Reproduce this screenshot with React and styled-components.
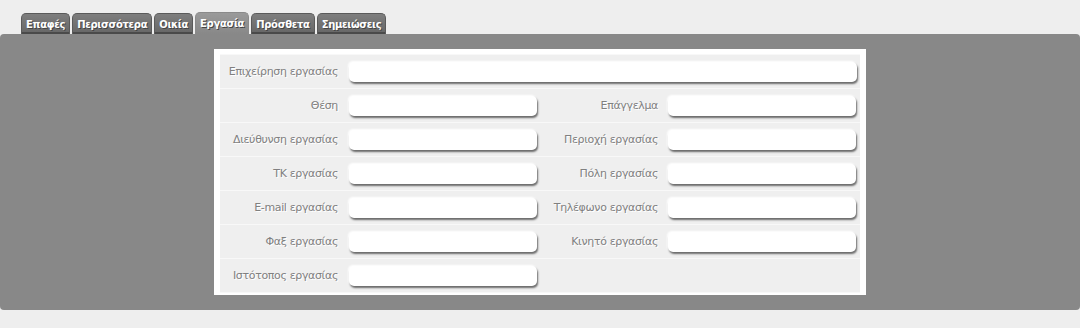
import React from "react";
import styled, { createGlobalStyle } from "styled-components";

const Global = createGlobalStyle`
  html, body { margin: 0; padding: 0; background: #eeeeee; }
  body { font-family: "DejaVu Sans", Verdana, sans-serif; }
`;

const Page = styled.div`
  width: 1080px;
  height: 328px;
  padding-top: 12px;
  box-sizing: border-box;
`;

const TabBar = styled.div`
  display: flex;
  gap: 2px;
  padding-left: 21px;
  height: 22px;
  align-items: flex-end;
`;

const Tab = styled.div`
  height: ${p => (p.$active ? "22px" : "21px")};
  box-sizing: border-box;
  padding: 0 4px;
  display: flex;
  align-items: center;
  border-radius: 5px 5px 0 0;
  border: 1px solid ${p => (p.$active ? "#8a8a8a" : "#5a5a5a")};
  border-bottom: none;
  background: ${p =>
    p.$active
      ? "linear-gradient(#9a9a9a, #888888)"
      : "linear-gradient(#7e7e7e, #666666)"};
  box-shadow: ${p => (p.$active ? "none" : "inset 0 -2px 0 #4a4a4a")};
  color: #ffffff;
  font-family: "DejaVu Sans", Verdana, sans-serif;
  font-weight: bold;
  font-size: 10px;
  letter-spacing: -0.3px;
  text-shadow: 1px 1px 0 #444;
`;

const Panel = styled.div`
  background: #888888;
  border-radius: 4px;
  height: 276px;
  padding-top: 15px;
  box-sizing: border-box;
  display: flex;
  justify-content: center;
`;

const FormBox = styled.div`
  width: 652px;
  height: 246px;
  box-sizing: border-box;
  background: #ffffff;
  padding: 5px 6px 7px 6px;
`;

const Table = styled.table`
  width: 640px;
  table-layout: fixed;
  border-collapse: separate;
  border-spacing: 0 1px;
  background: #f8f8f8;
`;

const Row = styled.tr`
  height: 33px;
`;

const LabelCell = styled.td`
  background: #efefef;
  text-align: right;
  padding: 0 ${p => p.$pr}px 0 0;
  color: #808080;
  font-family: "DejaVu Sans", Verdana, sans-serif;
  font-size: 11px;
  letter-spacing: -0.35px;
  white-space: nowrap;
  text-shadow: 1px 1px 0 #ffffff;
`;

const FieldCell = styled.td`
  background: #efefef;
  padding: 0 0 0 4px;
`;

const Input = styled.div`
  height: 20px;
  width: ${p => p.$w}px;
  background: #ffffff;
  border-radius: 5px;
  box-shadow: 1px 2px 2px #6a6a6a, -1px -1px 2px #ffffff;
`;

const rows = [
  ["Θέση", "Επάγγελμα"],
  ["Διεύθυνση εργασίας", "Περιοχή εργασίας"],
  ["ΤΚ εργασίας", "Πόλη εργασίας"],
  ["E-mail εργασίας", "Τηλέφωνο εργασίας"],
  ["Φαξ εργασίας", "Κινητό εργασίας"],
  ["Ιστότοπος εργασίας", null],
];

const tabs = ["Επαφές", "Περισσότερα", "Οικία", "Εργασία", "Πρόσθετα", "Σημειώσεις"];

export default function App() {
  return (
    <Page>
      <Global />
      <TabBar>
        {tabs.map(t => (
          <Tab key={t} $active={t === "Εργασία"}>{t}</Tab>
        ))}
      </TabBar>
      <Panel>
        <FormBox>
          <Table>
            <colgroup>
              <col style={{ width: 125 }} />
              <col style={{ width: 195 }} />
              <col style={{ width: 124 }} />
              <col style={{ width: 196 }} />
            </colgroup>
            <tbody>
              <Row>
                <LabelCell $pr={7}>Επιχείρηση εργασίας</LabelCell>
                <FieldCell colSpan={3}><Input $w={508} /></FieldCell>
              </Row>
              {rows.map(([a, b]) => (
                <Row key={a}>
                  <LabelCell $pr={7}>{a}</LabelCell>
                  <FieldCell><Input $w={188} /></FieldCell>
                  <LabelCell $pr={6}>{b}</LabelCell>
                  <FieldCell>{b && <Input $w={188} />}</FieldCell>
                </Row>
              ))}
            </tbody>
          </Table>
        </FormBox>
      </Panel>
    </Page>
  );
}
